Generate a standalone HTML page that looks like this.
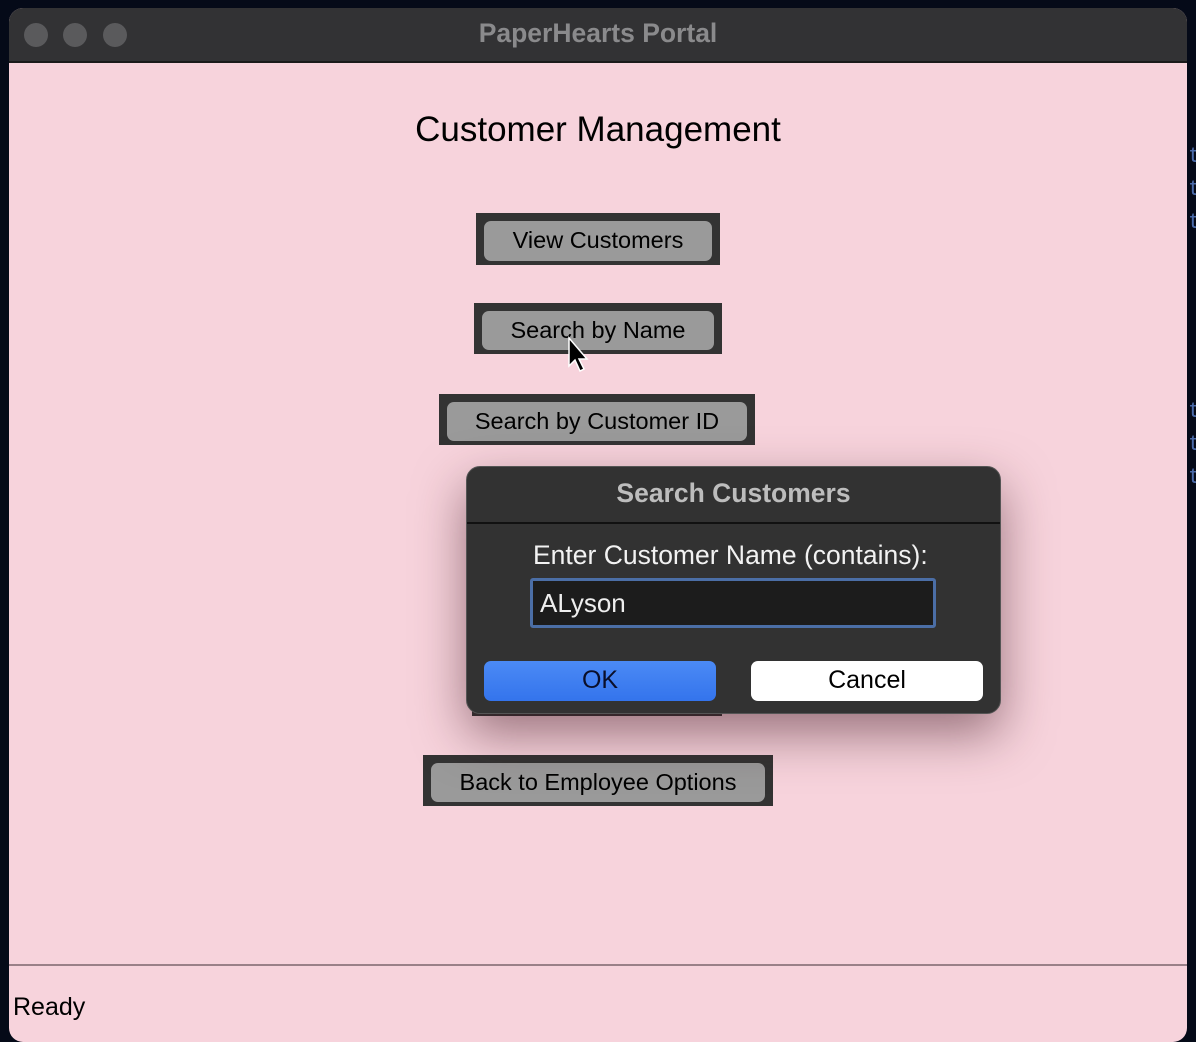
<!DOCTYPE html>
<html><head><meta charset="utf-8"><style>
*{margin:0;padding:0;box-sizing:border-box}
body{width:1196px;height:1042px;background:#050a18;position:relative;overflow:hidden;font-family:"Liberation Sans",sans-serif}
.win{position:absolute;left:9px;top:8px;width:1178px;height:1034px;border-radius:14px;overflow:hidden;background:#f7d3dc}
.tb{position:absolute;left:0;top:0;width:100%;height:55px;background:#323234;border-bottom:2px solid #1a1a1a}
.dot{position:absolute;top:15px;width:24px;height:24px;border-radius:50%;background:#5a5a5c}
.tt{position:absolute;left:0;right:0;top:10px;text-align:center;color:#8a8a8c;font-weight:bold;font-size:26.5px}
.h{position:absolute;left:0;right:0;top:102px;text-align:center;font-size:35px;color:#000}
.b{position:absolute;background:#333;}
.b span{position:absolute;left:8px;right:8px;top:8px;bottom:4px;background:#9a9a9a;border-radius:7px;font-size:23.5px;text-align:center;line-height:38px;color:#000}
.sl{position:absolute;left:0;right:0;top:956px;height:2px;background:#9a8088}
.ready{position:absolute;left:4px;top:985px;font-size:25px;color:#000}
.dlg{position:absolute;left:466px;top:466px;width:535px;height:248px;background:#323232;border-radius:14px;border:1px solid #555;box-shadow:0 20px 50px rgba(60,20,30,.5)}
.dt{position:absolute;left:0;right:0;top:11px;text-align:center;color:#bdbdbd;font-weight:bold;font-size:26.5px}
.dl{position:absolute;left:0;right:0;top:55px;height:2px;background:#111}
.lab{position:absolute;left:66px;top:73px;color:#f2f2f2;font-size:26.5px}
.inp{position:absolute;left:63px;top:111px;width:406px;height:50px;background:#1c1c1c;border:3px solid #4b6ea6;border-radius:3px;color:#eee;font-size:26px;padding:7px 0 0 7px}
.ok{position:absolute;left:17px;top:194px;width:232px;height:40px;border-radius:7px;background:linear-gradient(#4b8af5,#3474ec);text-align:center;line-height:38px;font-size:25px;color:#0a0f2a}
.cn{position:absolute;left:284px;top:194px;width:232px;height:40px;border-radius:7px;background:#fff;text-align:center;line-height:38px;font-size:25px;color:#000}
</style></head><body>
<div class="win">
 <div class="tb"><div class="dot" style="left:15px"></div><div class="dot" style="left:54px"></div><div class="dot" style="left:94px"></div><div class="tt">PaperHearts Portal</div></div>
 <div class="h">Customer Management</div>
 <div class="b" style="left:467px;top:205px;width:244px;height:52px"><span>View Customers</span></div>
 <div class="b" style="left:465px;top:295px;width:248px;height:51px"><span>Search by Name</span></div>
 <div class="b" style="left:430px;top:386px;width:316px;height:51px"><span>Search by Customer ID</span></div>
 <div class="b" style="left:463px;top:660px;width:250px;height:48px"></div>
 <div class="b" style="left:414px;top:747px;width:350px;height:51px"><span>Back to Employee Options</span></div>
 <div class="sl"></div>
 <div class="ready">Ready</div>
</div>
<div style="position:absolute;left:1188px;top:140px;color:#4a6aa8;font-family:'Liberation Mono',monospace;font-size:22px;line-height:33px">t<br>t<br>t</div>
<div style="position:absolute;left:1188px;top:395px;color:#4a6aa8;font-family:'Liberation Mono',monospace;font-size:22px;line-height:33px">t<br>t<br>t</div>
<div class="dlg">
 <div class="dt">Search Customers</div><div class="dl"></div>
 <div class="lab">Enter Customer Name (contains):</div>
 <div class="inp">ALyson</div>
 <div class="ok">OK</div><div class="cn">Cancel</div>
</div>
<svg style="position:absolute;left:566px;top:336px" width="26" height="40" viewBox="0 0 26 40"><path d="M3 2 L3 30 L9 24 L14 35 L18 33 L13 23 L21 23 Z" fill="#000" stroke="#fff" stroke-width="1.5"/></svg>
</body></html>
